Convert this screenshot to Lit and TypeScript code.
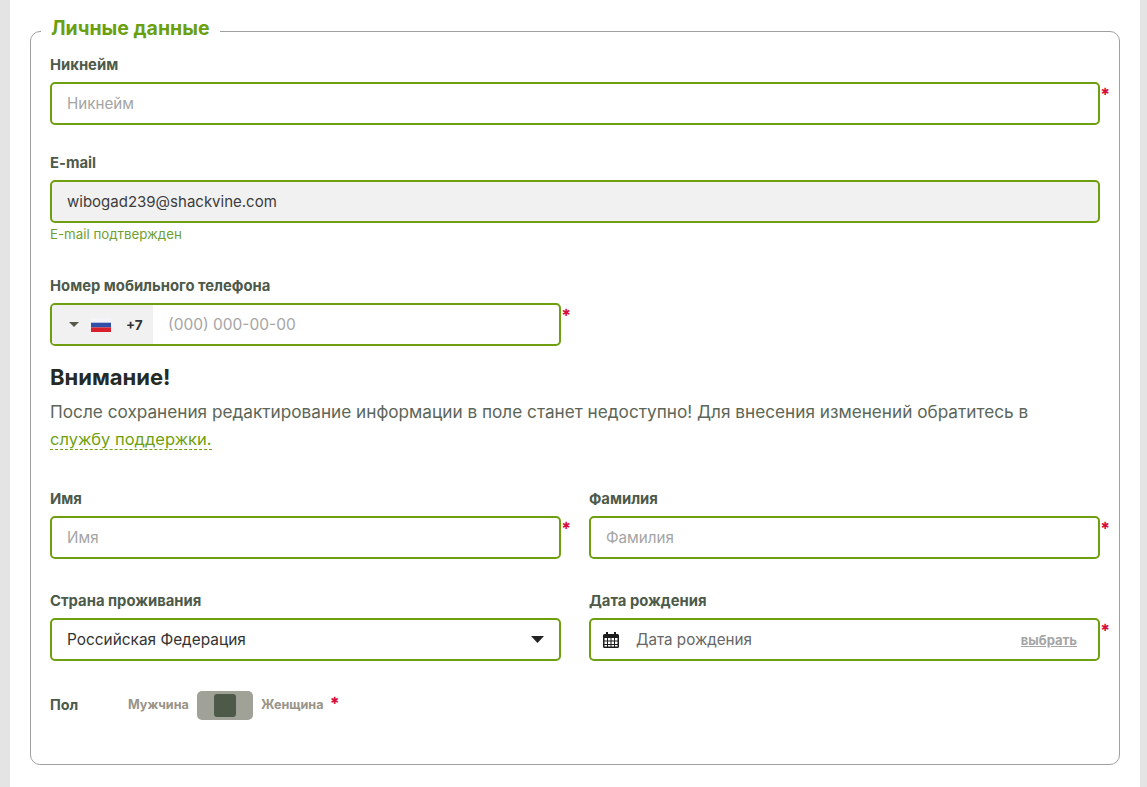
import { LitElement, html, css } from "lit";
import { customElement } from "lit/decorators.js";

@customElement("app-root")
export class AppRoot extends LitElement {
  static styles = css`
    :host { display: block; height: 787px; overflow: hidden; background: #fff; font-family: "Inter", "Noto Sans", sans-serif; color: #4d5a4a; }
    * { box-sizing: border-box; }
    .page { border-left: 10px solid #e4e4e4; border-right: 7px solid #e4e4e4; height: 787px; padding: 17px 20px 0 20px; }
    fieldset { margin: 0; border: 1px solid #a0a0a0; border-radius: 10px; height: 748px; padding: 0 19px; width: 1090px; min-width: 0; }
    legend { color: #6aa00f; font-size: 19.5px; font-weight: 700; padding: 0 10px 6px 10px; margin-left: -9px; line-height: 22px; }
    .label { font-size: 14.8px; font-weight: 700; color: #4d5a4a; line-height: 18px; }
    .input { height: 43px; border: 2px solid #6f9f10; border-radius: 5px; display: flex; align-items: center; padding: 0 15px; font-size: 15.2px; color: #a5a5a5; background: #fff; }
    .star { position: absolute; left: calc(100% + 1px); top: 2px; color: #d8103c; font-family: "DejaVu Sans", sans-serif; font-size: 10px; font-weight: 700; line-height: 16px; }
    .wrap { position: relative; margin-top: 8px; }
    .filled { background: #f1f1f1; color: #3c3c3c; font-size: 15px; }
    .hint { font-size: 13.3px; color: #6f9f30; margin-top: 3px; line-height: 16px; }
    .half { width: 511px; }
    .grid { display: grid; grid-template-columns: 511px 511px; column-gap: 28px; }
    .phone { padding: 0; overflow: hidden; }
    .code { width: 101px; height: 100%; background: #f1f1f1; display: flex; align-items: center; color: #333; font-weight: 700; font-size: 13.5px; padding-left: 17px; }
    .num { padding-left: 15px; font-size: 15.5px; }
    h3 { margin: 0; font-size: 22px; color: #252a25; font-weight: 700; line-height: 28px; }
    p { margin: 0; font-size: 17.2px; line-height: 27px; color: #5c6658; }
    a { color: #6f9f10; font-size: 16.5px; text-decoration: none; border-bottom: 1px dashed #6f9f10; white-space: nowrap; }
    .select { color: #333; justify-content: space-between; font-size: 15.4px; }
    .date { padding-left: 12px; color: #666; gap: 17px; }
    .pick { margin-left: auto; font-size: 13px; font-weight: 700; color: #a5a5a5; text-decoration: underline; margin-right: 6px; }
    .gender { display: flex; align-items: center; height: 30px; font-size: 14.4px; font-weight: 700; }
    .opt { color: #9a9488; font-size: 12.6px; padding-bottom: 2px; }
    .pol { width: 78px; padding-bottom: 2px; }
    .toggle { width: 56px; height: 29px; background: #a0a297; border-radius: 5px; display: flex; align-items: center; justify-content: center; margin: 0 8px; }
    .knob { width: 22px; height: 23px; background: #4d5a4a; border-radius: 3px; }
    .gstar { color: #d8103c; font-family: "DejaVu Sans", sans-serif; font-size: 10px; margin: -9px 0 0 7px; }
    .m1 { margin-top: 11px; } .m2 { margin-top: 29px; } .m3 { margin-top: 35px; } .m4 { margin-top: 17px; } .m5 { margin-top: 7px; } .m6 { margin-top: 37px; } .m7 { margin-top: 33px; } .m8 { margin-top: 29px; }
    .flag { margin: 0 15px 0 12px; }
  `;
  render() {
    return html`<div class="page"><fieldset>
      <legend>Личные данные</legend>
      <div class="label m1">Никнейм</div>
      <div class="wrap"><div class="input">Никнейм</div><span class="star">✱</span></div>
      <div class="label m2">E-mail</div>
      <div class="wrap"><div class="input filled">wibogad239@shackvine.com</div></div>
      <div class="hint">E-mail подтвержден</div>
      <div class="label m3">Номер мобильного телефона</div>
      <div class="wrap half"><div class="input phone">
        <div class="code">
          <svg width="10" height="5" viewBox="0 0 10 5"><path d="M0 0h10L5 5z" fill="#555a48"/></svg>
          <svg class="flag" width="20" height="14" viewBox="0 0 20 14"><rect width="20" height="14" fill="#f4f4f8"/><rect y="4.7" width="20" height="4.7" fill="#2f4fa8"/><rect y="9.4" width="20" height="4.6" fill="#d8202c"/></svg>
          +7
        </div>
        <span class="num">(000) 000-00-00</span></div><span class="star">✱</span></div>
      <h3 class="m4">Внимание!</h3>
      <p class="m5">После сохранения редактирование информации в поле станет недоступно! Для внесения изменений обратитесь в <a>службу поддержки.</a></p>
      <div class="grid m6">
        <div><div class="label">Имя</div><div class="wrap"><div class="input">Имя</div><span class="star">✱</span></div></div>
        <div><div class="label">Фамилия</div><div class="wrap"><div class="input">Фамилия</div><span class="star">✱</span></div></div>
      </div>
      <div class="grid m7">
        <div><div class="label">Страна проживания</div><div class="wrap"><div class="input select">Российская Федерация
          <svg width="13" height="7" viewBox="0 0 13 7"><path d="M0 0h13L6.5 7z" fill="#222"/></svg></div></div></div>
        <div><div class="label">Дата рождения</div><div class="wrap"><div class="input date">
          <svg width="16" height="16" viewBox="0 0 16 16"><path fill="#1c1c1c" d="M3 0h2v2h6V0h2v2h1.5A1.5 1.5 0 0 1 16 3.5v11a1.5 1.5 0 0 1-1.5 1.5h-13A1.5 1.5 0 0 1 0 14.5v-11A1.5 1.5 0 0 1 1.500 2H3z"/><path fill="#fff" d="M1.500 6h2.500v2.500H1.500zM5 6h2.500v2.500H5zM8.500 6H11v2.500H8.500zM12 6h2.500v2.500H12zM1.500 9.500h2.500V12H1.500zM5 9.500h2.500V12H5zM8.500 9.500H11V12H8.500zM12 9.500h2.500V12H12zM1.500 13h2.500v1.500H1.500zM5 13h2.500v1.500H5zM8.500 13H11v1.500H8.500zM12 13h2.500v1.500H12z"/></svg>
          Дата рождения<span class="pick">выбрать</span></div><span class="star">✱</span></div></div>
      </div>
      <div class="gender m8"><span class="pol">Пол</span><span class="opt">Мужчина</span><span class="toggle"><span class="knob"></span></span><span class="opt">Женщина</span><span class="gstar">✱</span></div>
    </fieldset></div>`;
  }
}
